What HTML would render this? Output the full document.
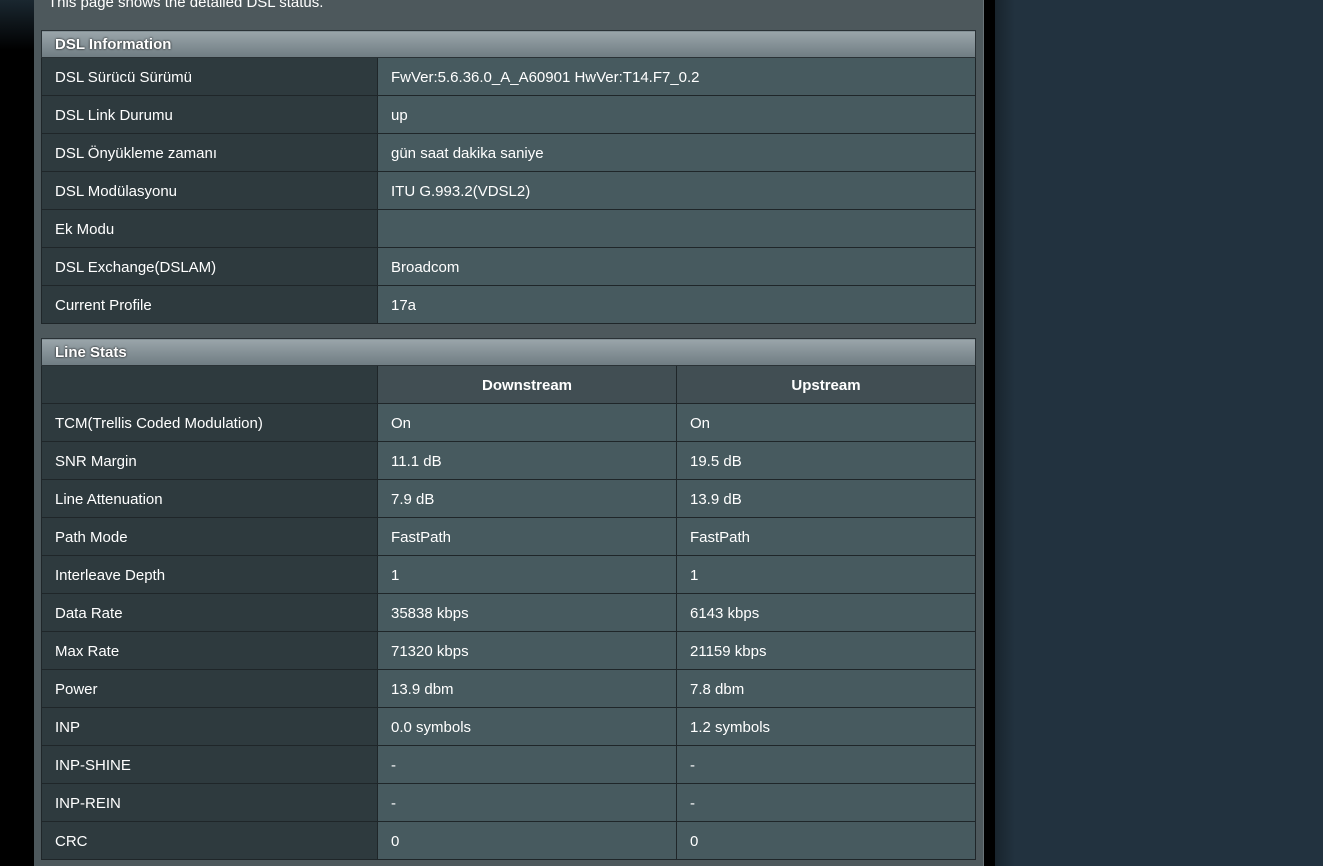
<!DOCTYPE html>
<html><head><meta charset="utf-8"><style>
body{margin:0;width:1323px;height:866px;overflow:hidden;background:#22323f;font-family:"Liberation Sans",Arial,sans-serif;position:relative}
.left{position:absolute;left:0;top:0;width:34px;height:866px;background:#000}
.lt{position:absolute;left:0;top:0;width:34px;height:50px;background:linear-gradient(#1a2730,#000)}
.panel{position:absolute;left:34px;top:0;width:949px;height:866px;background:#4d585c}
.sep{position:absolute;left:983px;top:0;width:12px;height:866px;background:#000;border-left:1px solid #6a7478;box-sizing:border-box}
.shade{position:absolute;left:995px;top:0;width:20px;height:866px;background:linear-gradient(90deg,#18242d,#22323f)}
.intro{position:absolute;left:48px;top:-6px;color:#fff;font-size:15px}
table{position:absolute;left:41px;border-collapse:collapse;width:935px;table-layout:fixed;color:#fff;font-size:15px}
td,th{border:1px solid #1f2629;padding:2px 0 0 13px;height:35px;text-align:left}
th.h{height:25px;padding-top:1px;background:linear-gradient(#9aa5aa,#6f7c82);font-weight:bold;font-size:15px;border:1px solid #2a3236;text-shadow:0 0 2px #000}
td.l{background:#2e3a3e}
td.v{background:#475a5f}
tr.ch td{background:#414e53;text-align:center;font-weight:bold;padding:2px 0 0 0}
</style></head><body>
<div class="left"></div><div class="lt"></div><div class="panel"></div><div class="sep"></div><div class="shade"></div>
<div class="intro">This page shows the detailed DSL status.</div>
<table style="top:30px">
<colgroup><col style="width:336px"><col></colgroup>
<tr><th class="h" colspan="2">DSL Information</th></tr>
<tr><td class="l">DSL Sürücü Sürümü</td><td class="v">FwVer:5.6.36.0_A_A60901 HwVer:T14.F7_0.2</td></tr>
<tr><td class="l">DSL Link Durumu</td><td class="v">up</td></tr>
<tr><td class="l">DSL Önyükleme zamanı</td><td class="v">gün saat dakika saniye</td></tr>
<tr><td class="l">DSL Modülasyonu</td><td class="v">ITU G.993.2(VDSL2)</td></tr>
<tr><td class="l">Ek Modu</td><td class="v"></td></tr>
<tr><td class="l">DSL Exchange(DSLAM)</td><td class="v">Broadcom</td></tr>
<tr><td class="l">Current Profile</td><td class="v">17a</td></tr>
</table>
<table style="top:338px">
<colgroup><col style="width:336px"><col style="width:299px"><col></colgroup>
<tr><th class="h" colspan="3">Line Stats</th></tr>
<tr class="ch"><td style="background:#2e3a3e"></td><td>Downstream</td><td>Upstream</td></tr>
<tr><td class="l">TCM(Trellis Coded Modulation)</td><td class="v">On</td><td class="v">On</td></tr>
<tr><td class="l">SNR Margin</td><td class="v">11.1 dB</td><td class="v">19.5 dB</td></tr>
<tr><td class="l">Line Attenuation</td><td class="v">7.9 dB</td><td class="v">13.9 dB</td></tr>
<tr><td class="l">Path Mode</td><td class="v">FastPath</td><td class="v">FastPath</td></tr>
<tr><td class="l">Interleave Depth</td><td class="v">1</td><td class="v">1</td></tr>
<tr><td class="l">Data Rate</td><td class="v">35838 kbps</td><td class="v">6143 kbps</td></tr>
<tr><td class="l">Max Rate</td><td class="v">71320 kbps</td><td class="v">21159 kbps</td></tr>
<tr><td class="l">Power</td><td class="v">13.9 dbm</td><td class="v">7.8 dbm</td></tr>
<tr><td class="l">INP</td><td class="v">0.0 symbols</td><td class="v">1.2 symbols</td></tr>
<tr><td class="l">INP-SHINE</td><td class="v">-</td><td class="v">-</td></tr>
<tr><td class="l">INP-REIN</td><td class="v">-</td><td class="v">-</td></tr>
<tr><td class="l">CRC</td><td class="v">0</td><td class="v">0</td></tr>
</table>
</body></html>
